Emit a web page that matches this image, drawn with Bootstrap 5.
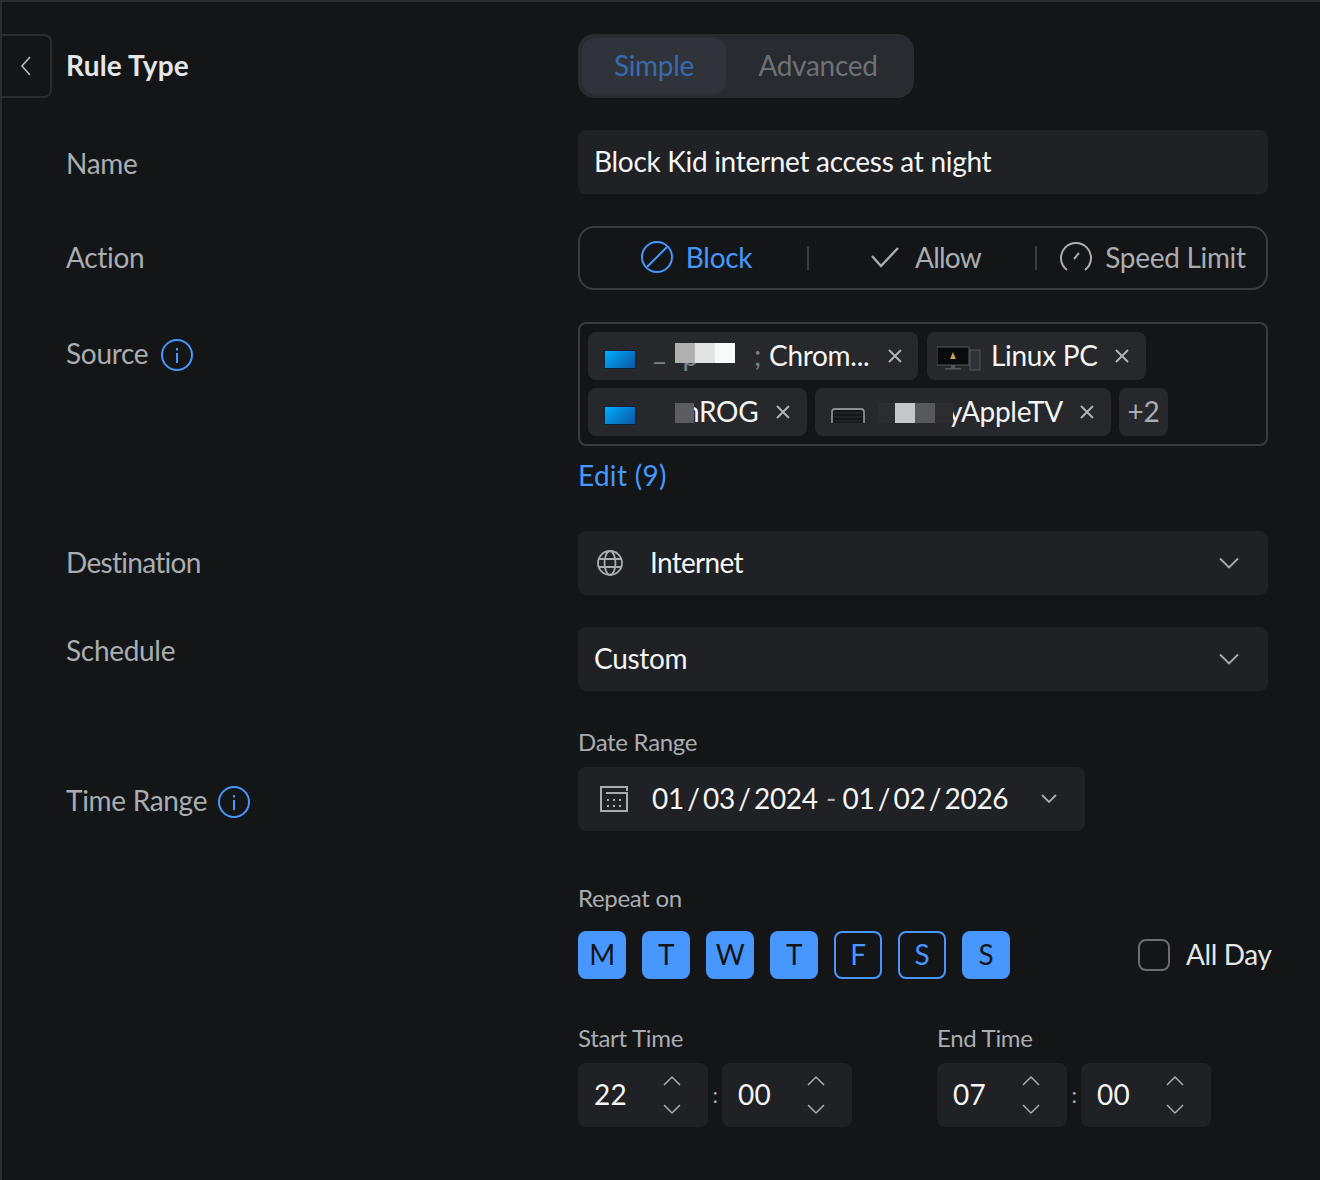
<!doctype html>
<html lang="en" data-bs-theme="dark">
<head>
<meta charset="utf-8">
<title>Rule</title>
<link rel="stylesheet" href="https://cdn.jsdelivr.net/npm/bootstrap@5.3.0/dist/css/bootstrap.min.css">
<style>
html,body{height:100%}
body{background:#131517;color:#f4f5f6;font-family:Lato,"Liberation Sans",sans-serif;font-size:28px;line-height:40px;letter-spacing:-.3px;overflow:hidden}
.shell{height:1180px;border-top:2px solid #2a2c30;border-left:2px solid #2a2c30;padding:32px 52px 0 0;width:1320px}
.lrow{width:576px;flex:none;color:#a9adb2;padding-left:64px}
.vcol{width:690px;flex:none}
.backbtn{position:absolute;left:0;top:32px;width:50px;height:64px;border:2px solid #2a2c30;border-left:0;border-radius:0 8px 8px 0;display:flex;align-items:center;justify-content:center}
.ruletitle{font-weight:700;color:#e4e6e8;height:64px;line-height:62px;letter-spacing:.2px}
.segwrap{width:336px;height:64px;background:#282b2f;border-radius:16px;padding:4px}
.seg{height:56px;display:flex;align-items:center;justify-content:center;border-radius:12px;padding-bottom:2px}
.seg-on{width:144px;background:#30343a;color:#376bad}
.seg-off{width:184px;color:#6e7176}
.field{height:64px;background:#1f2124;border-radius:8px;padding:0 16px 2px;color:#f4f5f6}
.field svg,.chip svg{margin-top:2px}
.actions{height:64px;border:2px solid #3a3c40;border-radius:16px;color:#a9adb2}
.actitem{height:100%;padding-bottom:2px}
.actdiv{width:2px;height:24px;background:#3a3c40;flex:none}
.blue{color:#4797ff}
.srcbox{height:124px;border:2px solid #3a3c40;border-radius:8px;padding:8px}
.chip{height:48px;background:#26282b;border-radius:8px;position:relative;color:#f4f5f6;white-space:nowrap;padding-bottom:2px}
.xmark{color:#b4b7bb;flex:none}
.mask{position:absolute;height:20px;top:11px}
.devscreen{width:32px;height:19px;background:linear-gradient(135deg,#00aeff,#0a56a5);border:1px solid #0c2438;flex:none;margin-top:8px;margin-left:-1px;margin-right:-1px}
.remnant{color:#7d8084}
.smalllab{font-size:24px;line-height:30px;color:#a9adb2}
.daybtn{width:48px;height:48px;border-radius:8px;display:flex;align-items:center;justify-content:center;padding-bottom:2px}
.dayon{background:#4797ff;color:#131518}
.dayoff{border:2px solid #4797ff;color:#4797ff}
.chk{width:32px;height:32px;border:2px solid #6a6d72;border-radius:8px}
.alldaytxt{color:#e4e6e8;margin-left:16px;white-space:nowrap;line-height:38px;padding-bottom:2px;letter-spacing:-.4px}
.timebox{width:130px;height:64px;background:#1f2124;border-radius:8px;padding:0 16px 2px;letter-spacing:.2px}
.sep{width:14px;text-align:center;font-size:22px;color:#a9adb2}
.stack{width:28px;margin-right:6px;margin-top:2px;gap:18px}
.tightlab{letter-spacing:-.7px}
.dateval{margin-left:24px;white-space:nowrap;word-spacing:-3.5px}
.datedash{margin:0 3px 0 5px;color:#a9adb2}
svg{display:block;flex:none}
.mt32{margin-top:32px}
</style>
</head>
<body>
<div class="shell position-relative">
  <div class="backbtn"><svg width="12" height="22" viewBox="0 0 12 22" fill="none" stroke="#b4b7bb" stroke-width="1.6"><path d="M10 2 2 11l8 9"/></svg></div>

  <div class="d-flex">
    <div class="lrow ruletitle">Rule Type</div>
    <div class="vcol"><div class="segwrap d-flex"><div class="seg seg-on">Simple</div><div class="seg seg-off">Advanced</div></div></div>
  </div>

  <div class="d-flex mt32">
    <div class="lrow" style="padding-top:13px">Name</div>
    <div class="vcol"><div class="field d-flex align-items-center">Block Kid internet access at night</div></div>
  </div>

  <div class="d-flex mt32">
    <div class="lrow d-flex align-items-center" style="padding-bottom:2px">Action</div>
    <div class="vcol"><div class="actions d-flex align-items-center">
      <div class="actitem d-flex align-items-center justify-content-center blue" style="width:227px;padding-left:5px;column-gap:12px">
        <svg width="34" height="34" viewBox="0 0 34 34" fill="none" stroke="#4797ff" stroke-width="2"><circle cx="17" cy="17" r="15"/><path d="M7 27 27 7"/></svg><span>Block</span></div>
      <div class="actdiv"></div>
      <div class="actitem d-flex align-items-center justify-content-center" style="width:226px;padding-left:7px;column-gap:15px">
        <svg width="30" height="22" viewBox="0 0 30 22" fill="none" stroke="#a9adb2" stroke-width="2.400"><path d="M2 10l9 10L28 2"/></svg><span style="letter-spacing:-.8px">Allow</span></div>
      <div class="actdiv"></div>
      <div class="actitem d-flex align-items-center justify-content-center flex-grow-1" style="padding-left:2px;column-gap:12px">
        <svg width="34" height="34" viewBox="0 0 34 34" fill="none" stroke="#a9adb2" stroke-width="2"><path d="M8 30A15 15 0 1 1 26 30"/><path d="M15 19l5-6"/></svg>Speed Limit</div>
    </div></div>
  </div>

  <div class="d-flex mt32">
    <div class="lrow d-flex align-items-start" style="padding-top:11px;column-gap:13px"><span>Source</span>
      <svg style="margin-top:6px" width="32" height="32" viewBox="0 0 32 32" fill="none" stroke="#4797ff" stroke-width="2"><circle cx="16" cy="16" r="15"/><path d="M16 14v10M16 9v2.500"/></svg></div>
    <div class="vcol">
      <div class="srcbox d-flex flex-wrap align-content-start" style="gap:8px 9px">
        <div class="chip d-flex align-items-center" style="width:330px;padding-left:17px"><div class="devscreen"></div><span class="remnant" style="margin-left:18px;padding-bottom:12px">_</span><span class="remnant" style="margin-left:17px">p</span><span class="remnant" style="margin-left:56px">;</span><span style="margin-left:8px">Chrom...</span><svg class="xmark ms-auto" style="margin-right:16px" width="14" height="14" viewBox="0 0 14 14" stroke="#b4b7bb" stroke-width="1.800"><path d="M1 1l12 12M13 1 1 13"/></svg>
          <div class="mask" style="left:87px;width:60px;background:linear-gradient(90deg,#b0b0b0 33%,#e2e3e3 33% 66%,#f8f9f9 66%)"></div></div>
        <div class="chip d-flex align-items-center" style="width:219px;padding-left:10px">
          <svg style="margin-top:6px" width="44" height="26" viewBox="0 0 44 26"><rect x="0" y="2" width="32" height="18" fill="#0b0b0c" stroke="#55585c"/><path d="M16 7l-3 7h6z" fill="#c99a5a"/><rect x="14" y="20" width="4" height="3" fill="#55585c"/><rect x="8" y="23" width="16" height="1.500" fill="#55585c"/><rect x="33" y="5" width="10" height="20" fill="#2f3236" stroke="#55585c"/></svg>
          <span style="margin-left:10px">Linux PC</span><svg class="xmark ms-auto" style="margin-right:17px" width="14" height="14" viewBox="0 0 14 14" stroke="#b4b7bb" stroke-width="1.800"><path d="M1 1l12 12M13 1 1 13"/></svg></div>
        <div class="chip d-flex align-items-center" style="width:219px;padding-left:17px"><div class="devscreen"></div><span style="margin-left:49px;white-space:nowrap">nROG</span><svg class="xmark ms-auto" style="margin-right:17px" width="14" height="14" viewBox="0 0 14 14" stroke="#b4b7bb" stroke-width="1.800"><path d="M1 1l12 12M13 1 1 13"/></svg>
          <div class="mask" style="left:87px;width:19px;top:15px;background:#5c5d60"></div></div>
        <div class="chip d-flex align-items-center" style="width:296px;padding-left:16px;margin-left:-1px">
          <svg style="margin-top:6px" width="34" height="18" viewBox="0 0 34 18"><path d="M1 18V7q0-3 3-3h26q3 0 3 3v11z" fill="#15161a"/><path d="M1 18V7q0-3 3-3h26q3 0 3 3v11" fill="none" stroke="#8a8d91" stroke-width="1.800"/><path d="M3 8h28M3 12h28M3 16h28" stroke="#2d2f33"/><rect x="12" y="3" width="10" height="2" fill="#8a8d91"/></svg>
          <span style="margin-left:83px;white-space:nowrap">yAppleTV</span><svg class="xmark ms-auto" style="margin-right:17px" width="14" height="14" viewBox="0 0 14 14" stroke="#b4b7bb" stroke-width="1.800"><path d="M1 1l12 12M13 1 1 13"/></svg>
          <div class="mask" style="left:63px;width:75px;top:15px;background:linear-gradient(90deg,#2b2d30 23%,#c6c7c8 23% 49%,#58595c 49% 76%,#2b2d30 76%)"></div></div>
        <div class="chip d-flex align-items-center justify-content-center" style="width:49px;color:#a9adb2;margin-left:-1px">+2</div>
      </div>
      <div class="blue" style="margin-top:9px;letter-spacing:.3px">Edit (9)</div>
    </div>
  </div>

  <div class="d-flex" style="margin-top:36px">
    <div class="lrow d-flex align-items-center tightlab" style="padding-bottom:2px">Destination</div>
    <div class="vcol"><div class="field d-flex align-items-center">
      <svg style="margin-left:2px" width="28" height="28" viewBox="0 0 28 28" fill="none" stroke="#a9adb2" stroke-width="1.800"><circle cx="14" cy="14" r="12"/><ellipse cx="14" cy="14" rx="5.500" ry="12"/><path d="M2 10h24M2 18h24"/></svg>
      <span class="tightlab" style="margin-left:26px">Internet</span>
      <svg class="ms-auto" style="margin-right:13px" width="20" height="12" viewBox="0 0 20 12" fill="none" stroke="#a9adb2" stroke-width="1.800"><path d="M1 1.500l9 9 9-9"/></svg></div></div>
  </div>

  <div class="d-flex mt32">
    <div class="lrow" style="padding-top:3px">Schedule</div>
    <div class="vcol"><div class="field d-flex align-items-center">Custom
      <svg class="ms-auto" style="margin-right:13px" width="20" height="12" viewBox="0 0 20 12" fill="none" stroke="#a9adb2" stroke-width="1.800"><path d="M1 1.500l9 9 9-9"/></svg></div></div>
  </div>

  <div class="d-flex" style="margin-top:36px">
    <div class="lrow"><div class="d-flex align-items-center" style="margin-top:53px;column-gap:11px">Time Range<svg style="margin-top:4px" width="32" height="32" viewBox="0 0 32 32" fill="none" stroke="#4797ff" stroke-width="2"><circle cx="16" cy="16" r="15"/><path d="M16 14v10M16 9v2.500"/></svg></div></div>
    <div class="vcol">
      <div class="smalllab">Date Range</div>
      <div class="field d-flex align-items-center" style="width:507px;margin-top:10px;padding-left:22px">
        <svg width="28" height="28" viewBox="0 0 28 28" fill="none" stroke="#a9adb2" stroke-width="2"><path d="M1 6V2h26v4M1 6v20h26V8H6" /><path d="M7 15h2M13 15h2M19 15h2M7 21h2M13 21h2M19 21h2"/></svg>
        <span class="dateval">01 / 03 / 2024 <span class="datedash">-</span> 01 / 02 / 2026</span>
        <svg class="ms-auto" style="margin-right:12px" width="16" height="10" viewBox="0 0 16 10" fill="none" stroke="#a9adb2" stroke-width="1.800"><path d="M1 1l7 7 7-7"/></svg>
      </div>
      <div class="smalllab" style="margin-top:52px">Repeat on</div>
      <div class="d-flex align-items-center" style="margin-top:18px">
        <div class="d-flex gap-3">
          <div class="daybtn dayon">M</div><div class="daybtn dayon">T</div><div class="daybtn dayon">W</div><div class="daybtn dayon">T</div><div class="daybtn dayoff">F</div><div class="daybtn dayoff">S</div><div class="daybtn dayon">S</div>
        </div>
        <div class="d-flex align-items-center" style="margin-left:128px"><div class="chk"></div><span class="alldaytxt">All Day</span></div>
      </div>
      <div class="d-flex" style="margin-top:44px">
        <div style="width:359px">
          <div class="smalllab">Start Time</div>
          <div class="d-flex align-items-center" style="margin-top:10px">
            <div class="timebox d-flex align-items-center">22<div class="stack ms-auto d-flex flex-column align-items-center"><svg width="18" height="11" viewBox="0 0 18 11" fill="none" stroke="#a9adb2" stroke-width="1.500"><path d="M1 10l8-8 8 8"/></svg><svg width="18" height="11" viewBox="0 0 18 11" fill="none" stroke="#a9adb2" stroke-width="1.500"><path d="M1 1l8 8 8-8"/></svg></div></div>
            <div class="sep">:</div>
            <div class="timebox d-flex align-items-center">00<div class="stack ms-auto d-flex flex-column align-items-center"><svg width="18" height="11" viewBox="0 0 18 11" fill="none" stroke="#a9adb2" stroke-width="1.500"><path d="M1 10l8-8 8 8"/></svg><svg width="18" height="11" viewBox="0 0 18 11" fill="none" stroke="#a9adb2" stroke-width="1.500"><path d="M1 1l8 8 8-8"/></svg></div></div>
          </div>
        </div>
        <div>
          <div class="smalllab">End Time</div>
          <div class="d-flex align-items-center" style="margin-top:10px">
            <div class="timebox d-flex align-items-center">07<div class="stack ms-auto d-flex flex-column align-items-center"><svg width="18" height="11" viewBox="0 0 18 11" fill="none" stroke="#a9adb2" stroke-width="1.500"><path d="M1 10l8-8 8 8"/></svg><svg width="18" height="11" viewBox="0 0 18 11" fill="none" stroke="#a9adb2" stroke-width="1.500"><path d="M1 1l8 8 8-8"/></svg></div></div>
            <div class="sep">:</div>
            <div class="timebox d-flex align-items-center">00<div class="stack ms-auto d-flex flex-column align-items-center"><svg width="18" height="11" viewBox="0 0 18 11" fill="none" stroke="#a9adb2" stroke-width="1.500"><path d="M1 10l8-8 8 8"/></svg><svg width="18" height="11" viewBox="0 0 18 11" fill="none" stroke="#a9adb2" stroke-width="1.500"><path d="M1 1l8 8 8-8"/></svg></div></div>
          </div>
        </div>
      </div>
    </div>
  </div>
</div>
<script src="https://cdn.jsdelivr.net/npm/bootstrap@5.3.0/dist/js/bootstrap.bundle.min.js"></script>
</body>
</html>
